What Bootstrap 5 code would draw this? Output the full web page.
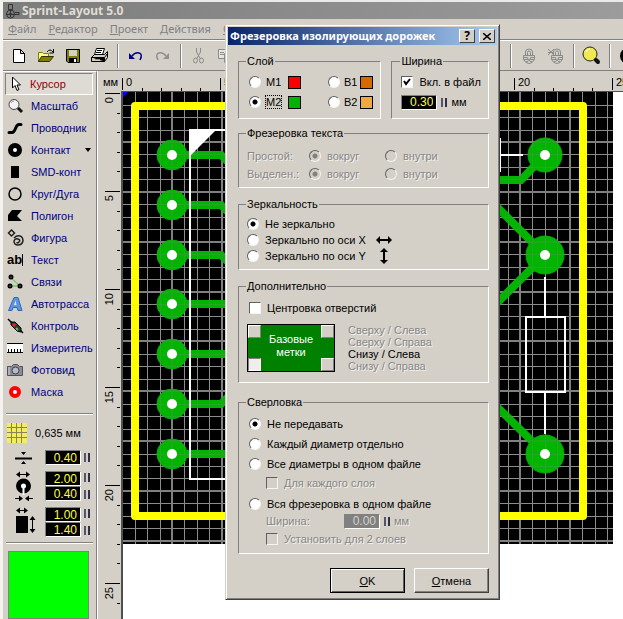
<!DOCTYPE html>
<html lang="ru">
<head>
<meta charset="utf-8">
<meta name="viewport" content="width=device-width, initial-scale=1">
<title>Sprint-Layout 5.0</title>
<link rel="stylesheet" href="https://cdn.jsdelivr.net/npm/bootstrap@5.3.0/dist/css/bootstrap.min.css">
<style>
:root { --face: #d4d0c8; --shade: #808080; --ink: #000080; }
body { font-family: "Liberation Sans", Arial, sans-serif; font-size: 11px; line-height: 14px; color: #000; background: var(--face); }
button, input { font: inherit; color: inherit; border-radius: 0; }
button { background: none; border: 0; padding: 0; }
svg { display: block; flex: none; }
.app { border-left: 3px solid #f4f3f0; border-top: 2px solid #eceae6; }
.app-title { height: 17px; padding: 0 2px; gap: 2px; background: linear-gradient(90deg, #7c7c7c, #9c9c9c); color: #e0ddd6; font: bold 12px/17px "Noto Sans", sans-serif; }
.app-menu { height: 20px; margin-top: 1px; padding: 0 5px; gap: 12px; border-bottom: 1px solid var(--shade); }
.app-menu a { color: #7f7f86; font: 11px/18px "Noto Sans", sans-serif; text-decoration: none; }
.tools { height: 31px; padding-left: 2px; border-top: 1px solid #fff; border-bottom: 1px solid var(--shade); }
.tool { width: 27px; height: 27px; flex: none; display: flex; align-items: center; justify-content: center; }
.tool-sep { width: 2px; height: 24px; margin: 0 3px 0 4px; flex: none; background: linear-gradient(90deg, #808080 50%, #fff 50%); }
.tool-gap { width: 267px; flex: none; }

.side { width: 94px; flex: none; border-right: 1px solid var(--shade); border-top: 1px solid #fff; padding-top: 1px; }
.mode { height: 22px; width: 88px; flex: none; margin-left: 2px; padding-left: 2px; gap: 6px; color: var(--ink); white-space: nowrap; text-align: left; }
.mode.current { color: #900000; background: #dedbd5; border: 1px solid; border-color: #808080 #fff #fff #808080; padding-left: 1px; }
.caret { width: 0; border: 3px solid transparent; border-top: 4px solid #000; border-bottom: 0; margin-left: 5px; }
.side-rule { height: 2px; margin: 0 3px; background: linear-gradient(#808080 50%, #fff 50%); flex: none; }
.side-rule.first { margin-top: 10px; margin-bottom: 4px; }
.params { display: grid; grid-template-columns: 36px 36px 6px; column-gap: 3px; row-gap: 6px; margin: 7px 0 5px 3px; align-items: center; }
.num { width: 36px; height: 15px; padding: 0 3px 0 0; text-align: right; font-size: 12px; background: #000; color: #ffff40; border: 1px solid; border-color: #808080 #fff #fff #808080; outline: 0; }
.num:disabled { background: #808080; color: var(--face); opacity: 1; }
.spin { width: 6px; height: 9px; background: linear-gradient(90deg, #55556a 2px, #d4d0c8 2px, #d4d0c8 4px, #303048 4px); }
.swatch { margin: 7px 7px 0 5px; background: #0f0; border: 1px solid #808080; flex: 1; }

.work { border-left: 1px solid #fff; min-width: 0; }
.ruler-x { height: 20px; }
.ruler-y { width: 23px; flex: none; }
.sheet { background: #fff; border-left: 2px solid #505050; border-top: 1px solid #505050; min-width: 0; overflow: hidden; }

.dlg { position: absolute; left: 225px; top: 24px; width: 275px; background: var(--face); border: 1px solid; border-color: #d4d0c8 #404040 #404040 #d4d0c8; box-shadow: inset 1px 1px #fff, inset -1px -1px #808080; padding: 2px; }
.dlg-title { height: 18px; background: linear-gradient(90deg, #0a246a, #a6caf0); color: #fff; font: bold 11px/18px "Noto Sans", sans-serif; padding: 0 2px; white-space: nowrap; }
.cap-btn { width: 16px; height: 14px; background: var(--face); color: #000; border: 1px solid; border-color: #fff #404040 #404040 #fff; font: bold 12px/12px "Noto Sans", sans-serif; display: flex; align-items: center; justify-content: center; }
.dlg-body { padding: 9px 8px 4px 10px; }
.pair { gap: 10px; }
.group { border: 1px solid; border-color: #808080 #fff #fff #808080; padding: 0 8px; }
.group legend { float: none; width: auto; margin: 0 0 0 -1px; padding: 0 1px; font-size: 11px; line-height: 14px; }
.opt { display: flex; align-items: center; gap: 6px; white-space: nowrap; }
.opt input { appearance: none; flex: none; margin: 0; width: 12px; height: 12px; background: #fff; border: 1px solid; border-color: #606060 #f4f4f0 #f4f4f0 #606060; }
.opt input[type=radio] { border-radius: 50%; }
.opt input[type=radio]:checked { background: radial-gradient(circle, #000 2px, #fff 3px); }
.opt input:disabled { background: var(--face); }
.opt input[type=radio]:disabled:checked { background: radial-gradient(circle, #808080 2px, var(--face) 3px); }
.tick { position: relative; display: flex; }
.tick svg { position: absolute; left: 2px; top: 2px; pointer-events: none; }
.off { color: #868686; text-shadow: 1px 1px #f4f2ee; }
.chip { width: 13px; height: 13px; border: 1px solid #000; flex: none; }
.chip-m1 { background: #f00; }
.chip-m2 { background: #00b400; }
.chip-b1 { background: #d86800; }
.chip-b2 { background: #f0a840; }
.r20 { height: 20px; }
.r18 { height: 18px; }
.r16 { height: 16px; }
.layers { display: grid; grid-template-columns: 17px 22px 40px 16px 16px 13px; align-items: center; padding: 4px 0 6px 2px; }
.focus { outline: 1px dotted #000; }
.g-width { width: 98px; padding: 0 9px; }
.g-text, .g-extra { margin-top: 7px; }
.g-mirror { margin-top: 9px; padding-bottom: 5px; }
.g-mirror legend, .g-drill legend { margin-bottom: 5px; }
.g-extra { margin-top: 9px; padding-bottom: 10px; }
.g-extra legend { margin-bottom: 7px; }
.g-drill { margin-top: 12px; padding-bottom: 5px; }
.g-extra > .opt, .g-drill > .opt, .g-drill > .sub { margin-left: 2px; }
.row-set { display: grid; grid-template-columns: 62px 76px 1fr; align-items: center; padding: 7px 0 4px; }
.plate { width: 88px; height: 48px; background: #008000; border: 1px solid #000; color: #fff; display: grid; grid-template-columns: 13px 1fr 13px; grid-template-rows: 1fr 1fr; }
.plate span { grid-column: 2; grid-row: 1 / 3; line-height: 13px; text-align: center; align-self: start; padding-top: 8px; }
.corner { width: 13px; height: 13px; grid-row: 1; background: var(--face); border: 1px solid; border-color: #fff #808080 #808080 #fff; }
.corner.low { align-self: end; grid-row: 2; }
.corner.right { grid-column: 3; }
.corner.on { background: #f0eeec; border-color: #808080 #fff #fff #808080; }
.places { line-height: 12px; list-style: none; margin: 0 0 0 13px; padding: 0; }
.sub { padding-left: 17px; }
.drill-label { width: 74px; }
.foot { margin-top: 14px; gap: 9px; }
.push { width: 75px; height: 25px; background: var(--face); border: 1px solid; border-color: #fff #404040 #404040 #fff; box-shadow: inset -1px -1px #808080; }
.push.main { border-color: #000; box-shadow: inset 1px 1px #fff, inset -1px -1px #606060; }
</style>
<script src="https://cdn.jsdelivr.net/npm/bootstrap@5.3.0/dist/js/bootstrap.bundle.min.js"></script>
</head>
<body>
<div class="app d-flex flex-column vh-100 overflow-hidden">
  <header class="app-title d-flex align-items-center">
    <svg width="15" height="16" fill="none" stroke="#333"><path d="M3.500 1.500h4v5h-4zM5.500 6v8M1 11.500h13v-2h-4"/><circle cx="5.500" cy="11" r="4"/><circle cx="5.500" cy="11" r="1"/></svg>
    <span>Sprint-Layout 5.0</span>
  </header>
  <nav class="app-menu d-flex overflow-hidden">
    <a href="#"><u>Ф</u>айл</a><a href="#"><u>Р</u>едактор</a><a href="#"><u>П</u>роект</a><a href="#"><u>Д</u>ействия</a><a href="#"><u>О</u>пции</a>
  </nav>
  <div class="tools d-flex align-items-center overflow-hidden" role="toolbar">
    <button class="tool" aria-label="Новый"><svg width="12" height="14" fill="#fff" stroke="#000"><path d="M.5.5h7l4 4v9H.5zM7.500.5v4h4"/></svg></button>
    <button class="tool" aria-label="Открыть"><svg width="18" height="14"><path d="M1.500 12.500v-9h4l1 1h5v3" fill="#ffff80" stroke="#808000"/><path d="M1.500 12.500l3-5h12l-4 5z" fill="#808000" stroke="#303000"/><path d="M10 3q3-4 6 0M16.500 0v4h-4" fill="none" stroke="#000"/></svg></button>
    <button class="tool" aria-label="Сохранить"><svg width="14" height="14"><path d="M.5.5h13v13H2l-1.500-1.500z" fill="#808000" stroke="#000"/><path d="M3 1h8v6H3z" fill="#d4d0c8"/><path d="M3 9h8v4H3z" fill="#000"/><path d="M8 10h2v3H8z" fill="#fff"/></svg></button>
    <button class="tool" aria-label="Печать"><svg width="17" height="15" stroke="#000"><path d="M5.500.5h8l-2 6h-8z" fill="#fff"/><path d="M6 2.500h5M5 4.500h5"/><path d="M3.500 6.500h10l3-3v6l-3 4H.5v-4z" fill="#d4d0c8"/><path d="M.5 9.500h13v4M14 9l2-3"/><path d="M4 11.500h5" stroke="#a0a000"/></svg></button>
    <span class="tool-sep"></span>
    <button class="tool" aria-label="Отменить"><svg width="14" height="10"><path d="M0 2v6h6z" fill="#000080"/><path d="M3 5q3-4 7-3t1 7" fill="none" stroke="#000080" stroke-width="1.500"/></svg></button>
    <button class="tool" aria-label="Вернуть"><svg width="14" height="10"><path d="M13 2v6H7z" fill="#909090"/><path d="M10 5Q7 1 3 2T2 9" fill="none" stroke="#909090" stroke-width="1.500"/></svg></button>
    <span class="tool-sep"></span>
    <button class="tool" aria-label="Вырезать"><svg width="11" height="16" fill="none" stroke="#8a8a8a"><path d="M3.500 0v4l4 7M7.500 0v4l-4 7"/><ellipse cx="2.500" cy="12.500" rx="2" ry="2.500"/><ellipse cx="8.500" cy="12.500" rx="2" ry="2.500"/></svg></button>
    <button class="tool" aria-label="Копировать"><svg width="16" height="14" fill="#e8e6e0" stroke="#8a8a8a"><path d="M.5.5h6l2 2v7h-8zM2 3.500h4M2 5.500h4M6.500 4.500h6l2 2v7h-8zM8 8.500h5M8 10.500h5"/></svg></button>
    <span class="tool-gap"></span>
    <span class="tool-sep"></span>
    <button class="tool" aria-label="Закрепить"><svg width="14" height="16" fill="none" stroke="#8a8a8a"><path d="M3.500 7V4q0-3 3.500-3t3.500 3v3M5.500 7V4.500q0-1.500 1.500-1.500t1.500 1.500V7M1.500 7.500h11v4q-2 4-5.500 4t-5.500-4zM2 9.500h3M9 9.500h3M2 11.500h4M8 11.500h4M4 13.500h2M8 13.500h2M5 9l2 4 2-4"/></svg></button>
    <button class="tool" aria-label="Освободить"><svg width="16" height="16" fill="none" stroke="#8a8a8a"><path d="M5.500 7V4q0-3 3.500-3t3.500 3v3M7.500 7V4.500q0-1.500 1.500-1.500t1.500 1.500V7M3.500 7.500h11v4q-2 4-5.500 4t-5.500-4zM4 9.500h3M11 9.500h3M4 11.500h4M10 11.500h4M6 13.500h2M10 13.500h2M7 9l2 4 2-4M0 1l6 6M6 1L0 7M0 4.500h6"/></svg></button>
    <span class="tool-sep"></span>
    <button class="tool" aria-label="Лупа"><svg width="19" height="19"><circle cx="8" cy="8" r="7" fill="#f0ea50" stroke="#222"/><path d="M4 6q1-3 4-3" stroke="#fff" fill="none"/><path d="M14 14l2 2" stroke="#111" stroke-width="4" stroke-linecap="round"/></svg></button>
    <span class="tool-sep"></span>
    <button class="tool" aria-label="Контакты"><svg width="16" height="16"><circle cx="8" cy="8" r="8"/></svg></button>
  </div>
  <main class="d-flex flex-grow-1 overflow-hidden">
    <aside class="side d-flex flex-column">
      <button class="mode current d-flex align-items-center"><svg width="17" height="16"><path d="M5.500 1v11l2.500-2.500 2 5 2-1-2-4.500h3.500z" fill="#fff" stroke="#000"/></svg>Курсор</button>
      <button class="mode d-flex align-items-center"><svg width="18" height="16"><circle cx="7" cy="6.500" r="5" fill="#f4f4f4" stroke="#444"/><path d="M4 5q1-2 3-2" stroke="#999" fill="none"/><path d="M11 10l4 4" stroke="#111" stroke-width="3"/></svg>Масштаб</button>
      <button class="mode d-flex align-items-center"><svg width="18" height="16"><path d="M2 12.500h3q2 0 3.500-4T12 4.500h2" fill="none" stroke="#000" stroke-width="3" stroke-linejoin="round" stroke-linecap="round"/></svg>Проводник</button>
      <button class="mode d-flex align-items-center"><svg width="18" height="16"><circle cx="8" cy="8" r="4.500" fill="#fff" stroke="#000" stroke-width="5"/></svg>Контакт<i class="caret ms-2"></i></button>
      <button class="mode d-flex align-items-center"><svg width="18" height="16"><path d="M4 2h8v12H4z"/></svg>SMD-конт</button>
      <button class="mode d-flex align-items-center"><svg width="18" height="16"><circle cx="8" cy="8" r="6" fill="none" stroke="#000" stroke-width="1.500"/></svg>Круг/Дуга</button>
      <button class="mode d-flex align-items-center"><svg width="18" height="16"><path d="M5 2h10l-5 6 5 5H1V7z"/></svg>Полигон</button>
      <button class="mode d-flex align-items-center"><svg width="18" height="18" fill="none" stroke="#222"><path d="M4.500 1l3 3-3 3-3-3z" stroke-width="1.500"/><path d="M7 9q3-3 6-2t3 5q-1 4-5 4t-4-4q1-3 4-2t1 3-2 0" stroke-width="1.500"/></svg>Фигура</button>
      <button class="mode d-flex align-items-center"><svg width="18" height="16"><text x="0" y="12" font-size="13" font-weight="bold">ab</text><path d="M15.500 2v12" stroke="#000"/></svg>Текст</button>
      <button class="mode d-flex align-items-center"><svg width="18" height="16"><path d="M4 4l9 8M3 12h10" stroke="#40c040"/><g fill="#fff" stroke="#000" stroke-width="2"><circle cx="4" cy="3" r="1.500"/><circle cx="3" cy="12" r="1.500"/><circle cx="13" cy="12" r="1.500"/></g></svg>Связи</button>
      <button class="mode d-flex align-items-center"><svg width="18" height="18"><path d="M1.500 15.500L7 2.500h4l4 13h-4l-1-3H6l-1 3z" fill="#5c94e0" stroke="#3468b0"/><path d="M7 10l1.500-4.500L9.500 10z" fill="#e4e4e4"/></svg>Автотрасса</button>
      <button class="mode d-flex align-items-center"><svg width="18" height="16"><path d="M1 1l4 4M11 10l5 5" stroke="#000" stroke-width="1.500"/><path d="M4 4l4 0 6 6v4l-4-1-6-6z" fill="#303830" stroke="#000"/><path d="M6 6l2 2" stroke="#f02020" stroke-width="3"/><path d="M9 10l2 2" stroke="#60c060" stroke-width="2"/></svg>Контроль</button>
      <button class="mode d-flex align-items-center"><svg width="18" height="12"><path d="M0 1h16v10H0z" fill="#fff"/><path d="M0 1.500h16M0 10.500h16M1.500 7v3M4.500 7v3M7.500 7v3M10.500 7v3M13.500 7v3" stroke="#000"/></svg>Измеритель</button>
      <button class="mode d-flex align-items-center"><svg width="18" height="14"><path d="M.5 3.500h4l2-2h4l2 2h3v9H.5z" fill="#8c8c98" stroke="#505058"/><path d="M2 4v8" stroke="#d0d0d8"/><circle cx="8.500" cy="7.500" r="3.500" fill="#b8bcc8" stroke="#404048"/></svg>Фотовид</button>
      <button class="mode d-flex align-items-center"><svg width="18" height="16"><circle cx="8" cy="8" r="4" fill="#fff" stroke="#f00" stroke-width="4"/></svg>Маска</button>
      <div class="side-rule first"></div>
      <div class="d-flex align-items-center gap-2 ps-1 pt-1">
        <svg width="20" height="20"><path d="M0 0h20v20H0z" fill="#f4ec60"/><path d="M4.500 0v20M9.500 0v20M14.500 0v20M0 4.500h20M0 9.500h20M0 14.500h20" stroke="#8a8450"/></svg>0,635 мм</div>
      <div class="params">
        <svg width="36" height="14"><path d="M9 7.500h17" stroke="#000" stroke-width="2"/><path d="M15 1h5l-2.500 3zM15 13h5l-2.500-3z"/></svg>
        <input class="num" value="0.40" aria-label="Ширина дорожки"><button class="spin" aria-label="Изменить"></button>
        <svg width="36" height="30"><path d="M11 3.500h12M9 27.500h6M20 27.500h7" stroke="#000"/><path d="M10 3.500l4-3v6zM24 3.500l-4-3v6zM17 27.500l-4-3v6zM19 27.500l4-3v6z"/><circle cx="17.500" cy="15" r="5" fill="#fff" stroke="#000" stroke-width="5"/><path d="M17.500 16v8" stroke="#fff" stroke-width="2"/></svg>
        <div><input class="num d-block" value="2.00" aria-label="Диаметр контакта"><input class="num d-block" value="0.40" aria-label="Отверстие"></div>
        <div class="d-grid gap-2"><button class="spin" aria-label="Изменить"></button><button class="spin" aria-label="Изменить"></button></div>
        <svg width="36" height="30"><path d="M10 9h12v17H10z"/><path d="M12 3.500h8M26.500 12v12" stroke="#000"/><path d="M10 3.500l4-3v6zM22 3.500l-4-3v6zM26.500 9l-3 4h6zM26.500 26l-3-4h6z"/></svg>
        <div><input class="num d-block" value="1.00" aria-label="Ширина SMD"><input class="num d-block" value="1.40" aria-label="Высота SMD"></div>
        <div class="d-grid gap-2"><button class="spin" aria-label="Изменить"></button><button class="spin" aria-label="Изменить"></button></div>
      </div>
      <div class="side-rule"></div>
      <div class="swatch"></div>
    </aside>
    <section class="work d-flex flex-column flex-grow-1">
      <svg class="ruler-x" width="100%" height="20"><g transform="translate(-98,-71)" id="rx"><text x="103" y="86">мм</text></g></svg>
      <div class="d-flex flex-grow-1">
        <svg class="ruler-y" height="100%"><g transform="translate(-98,-91)" id="ry"></g></svg>
        <div class="sheet flex-grow-1">
          <svg width="100%" height="100%"><g transform="translate(-123,-92)">
            <path d="M123 92h490v452H123z"/>
            <g id="grid" shape-rendering="crispEdges"></g>
            <g fill="none" stroke="#00b400" stroke-width="8">
              <path d="M172 155h49l20 20M172 205h49l20 20M172 255h49l20 20M172 304h70M172 354h70M172 404h49l20-20M172 454h70"/>
              <path d="M480 180h41l24-25M490 200l55 55-55 55M490 400l55 54"/>
            </g>
            <g stroke="#00b400" fill="#00b400">
              <g id="pads"></g>
              <circle cx="545" cy="155" r="17"/><circle cx="545" cy="255" r="19"/><circle cx="545" cy="454" r="19"/>
            </g>
            <use href="#grid" opacity=".25"/>
            <g fill="none" stroke="#fff" stroke-width="2">
              <path d="M240 130h-50v349h50M490 155h33M500 138v34M545 277v40M526 317h39v75h-39zM545 392v42"/>
            </g>
            <path d="M189 129h28l-28 28z" fill="#fff"/>
            <g fill="#fff" id="holes"><circle cx="545" cy="155" r="5"/><circle cx="545" cy="255" r="5"/><circle cx="545" cy="454" r="5"/></g>
            <rect x="135" y="106" width="448" height="410" fill="none" stroke="#ff0" stroke-width="8" stroke-linejoin="round"/>
            <path d="M123 92h5l-5 6z" fill="#00f"/>
          </g></svg>
        </div>
      </div>
    </section>
  </main>
</div>

<form class="dlg" role="dialog" aria-labelledby="dt">
  <div class="dlg-title d-flex align-items-center"><span id="dt" class="me-auto">Фрезеровка изолирующих дорожек</span>
    <button type="button" class="cap-btn me-1" aria-label="Справка">?</button>
    <button type="button" class="cap-btn" aria-label="Закрыть"><svg width="8" height="7"><path d="M0 0l8 7M8 0L0 7" stroke="#000" stroke-width="1.500"/></svg></button></div>
  <div class="dlg-body">
    <div class="d-flex pair">
      <fieldset class="group flex-grow-1"><legend>Слой</legend>
        <div class="layers">
          <span class="opt r20"><input type="radio" name="l" id="m1"></span><label for="m1">M1</label><i class="chip chip-m1"></i>
          <span class="opt r20"><input type="radio" name="l" id="b1"></span><label for="b1">B1</label><i class="chip chip-b1"></i>
          <span class="opt r20"><input type="radio" name="l" id="m2" checked></span><label for="m2"><span class="focus">M2</span></label><i class="chip chip-m2"></i>
          <span class="opt r20"><input type="radio" name="l" id="b2"></span><label for="b2">B2</label><i class="chip chip-b2"></i>
        </div>
      </fieldset>
      <fieldset class="group g-width"><legend>Ширина</legend>
        <label class="opt r20 mt-1"><span class="tick"><input type="checkbox" checked><svg width="8" height="8"><path d="M1 3l2 3 4-5" fill="none" stroke="#000" stroke-width="2"/></svg></span>Вкл. в файл</label>
        <div class="d-flex align-items-center r20 gap-1"><input class="num" value="0.30" aria-label="Ширина"><button type="button" class="spin" aria-label="Изменить"></button><span>мм</span></div>
      </fieldset>
    </div>
    <fieldset class="group g-text" disabled><legend>Фрезеровка текста</legend>
      <div class="row-set off">
        <span>Простой:</span><label class="opt r18"><input type="radio" name="p" checked>вокруг</label><label class="opt r18"><input type="radio" name="p">внутри</label>
        <span>Выделен.:</span><label class="opt r18"><input type="radio" name="v" checked>вокруг</label><label class="opt r18"><input type="radio" name="v">внутри</label>
      </div>
    </fieldset>
    <fieldset class="group g-mirror"><legend>Зеркальность</legend>
      <label class="opt r16"><input type="radio" name="z" checked>Не зеркально</label>
      <label class="opt r16"><input type="radio" name="z">Зеркально по оси X<svg class="ms-1" width="16" height="8"><path d="M2 4h12" stroke="#000" stroke-width="2"/><path d="M0 4l4-4v8zM16 4l-4-4v8z"/></svg></label>
      <label class="opt r16"><input type="radio" name="z">Зеркально по оси Y<svg class="ms-1" width="16" height="16"><path d="M8 2v12" stroke="#000" stroke-width="2"/><path d="M8 0l4 4H4zM8 16l4-4H4z"/></svg></label>
    </fieldset>
    <fieldset class="group g-extra"><legend>Дополнительно</legend>
      <label class="opt r16"><input type="checkbox">Центровка отверстий</label>
      <div class="d-flex mt-2">
        <div class="plate"><button type="button" class="corner" aria-label="Сверху слева"></button><span>Базовые<br>метки</span><button type="button" class="corner right" aria-label="Сверху справа"></button><button type="button" class="corner low on" aria-label="Снизу слева"></button><button type="button" class="corner right low" aria-label="Снизу справа"></button></div>
        <ul class="places"><li class="off">Сверху / Слева</li><li class="off">Сверху / Справа</li><li>Снизу / Слева</li><li class="off">Снизу / Справа</li></ul>
      </div>
    </fieldset>
    <fieldset class="group g-drill"><legend>Сверловка</legend>
      <label class="opt r20"><input type="radio" name="s" checked>Не передавать</label>
      <label class="opt r20"><input type="radio" name="s">Каждый диаметр отдельно</label>
      <label class="opt r20"><input type="radio" name="s">Все диаметры в одном файле</label>
      <label class="opt r18 off sub"><input type="checkbox" disabled>Для каждого слоя</label>
      <label class="opt r20 pt-1"><input type="radio" name="s">Вся фрезеровка в одном файле</label>
      <div class="d-flex align-items-center r18 off sub gap-1"><label for="w2" class="drill-label">Ширина:</label><input class="num" id="w2" value="0.00" disabled><button type="button" class="spin" aria-label="Изменить"></button><span>мм</span></div>
      <label class="opt r18 off sub"><input type="checkbox" disabled>Установить для 2 слоев</label>
    </fieldset>
    <div class="d-flex justify-content-end foot"><button type="submit" class="push main"><u>O</u>K</button><button type="button" class="push"><u>О</u>тмена</button></div>
  </div>
</form>
<script>
const NS = 'http://www.w3.org/2000/svg';
function add(parent, tag, attrs, text) {
  const el = document.createElementNS(NS, tag);
  for (const k in attrs) el.setAttribute(k, attrs[k]);
  if (text !== undefined) el.textContent = text;
  document.getElementById(parent).appendChild(el);
}
// grid: every fourth line is heavy
for (const heavy of [false, true]) {
  for (let i = -3; i < 36; i++) {
    if ((i % 4 === 0) !== heavy) continue;
    const x = Math.round(172 + i * 12.43), y = Math.round(142 + i * 12.46), w = heavy ? 2 : 1;
    const fill = heavy ? '#808080' : '#8c8c8c';
    if (x > 123 && x < 613) add('grid', 'rect', { x: x - w + 1, y: 92, width: w, height: 452, fill });
    if (y > 92 && y < 544) add('grid', 'rect', { x: 123, y: y - w + 1, width: 490, height: w, fill });
  }
}
// rulers: one tick per millimetre, as far as the window reaches
for (let mm = 0; 123 + mm * 19.6 < innerWidth; mm++) {
  const x = Math.round(123 + mm * 19.6), major = mm % 5 === 0;
  add('rx', 'rect', { x: x - 1, y: major ? 78 : 88, width: 1, height: major ? 12 : 3 });
  if (major) add('rx', 'text', { x: x + 3, y: 86 }, mm);
}
for (let mm = 0; 93 + mm * 19.6 < innerHeight; mm++) {
  const y = Math.round(93 + mm * 19.6), major = mm % 5 === 0;
  add('ry', 'rect', { x: major ? 105 : 117, y, width: major ? 15 : 3, height: 1 });
  if (major) add('ry', 'text', { transform: `translate(113,${y + 4}) rotate(-90)`, 'text-anchor': 'end' }, mm);
}
for (let i = 0; i < 7; i++) {
  const cy = Math.round(155 + i * 49.8);
  add('pads', 'circle', { cx: 172, cy, r: 15 });
  add('holes', 'circle', { cx: 172, cy, r: 5 });
}
</script>
</body>
</html>
